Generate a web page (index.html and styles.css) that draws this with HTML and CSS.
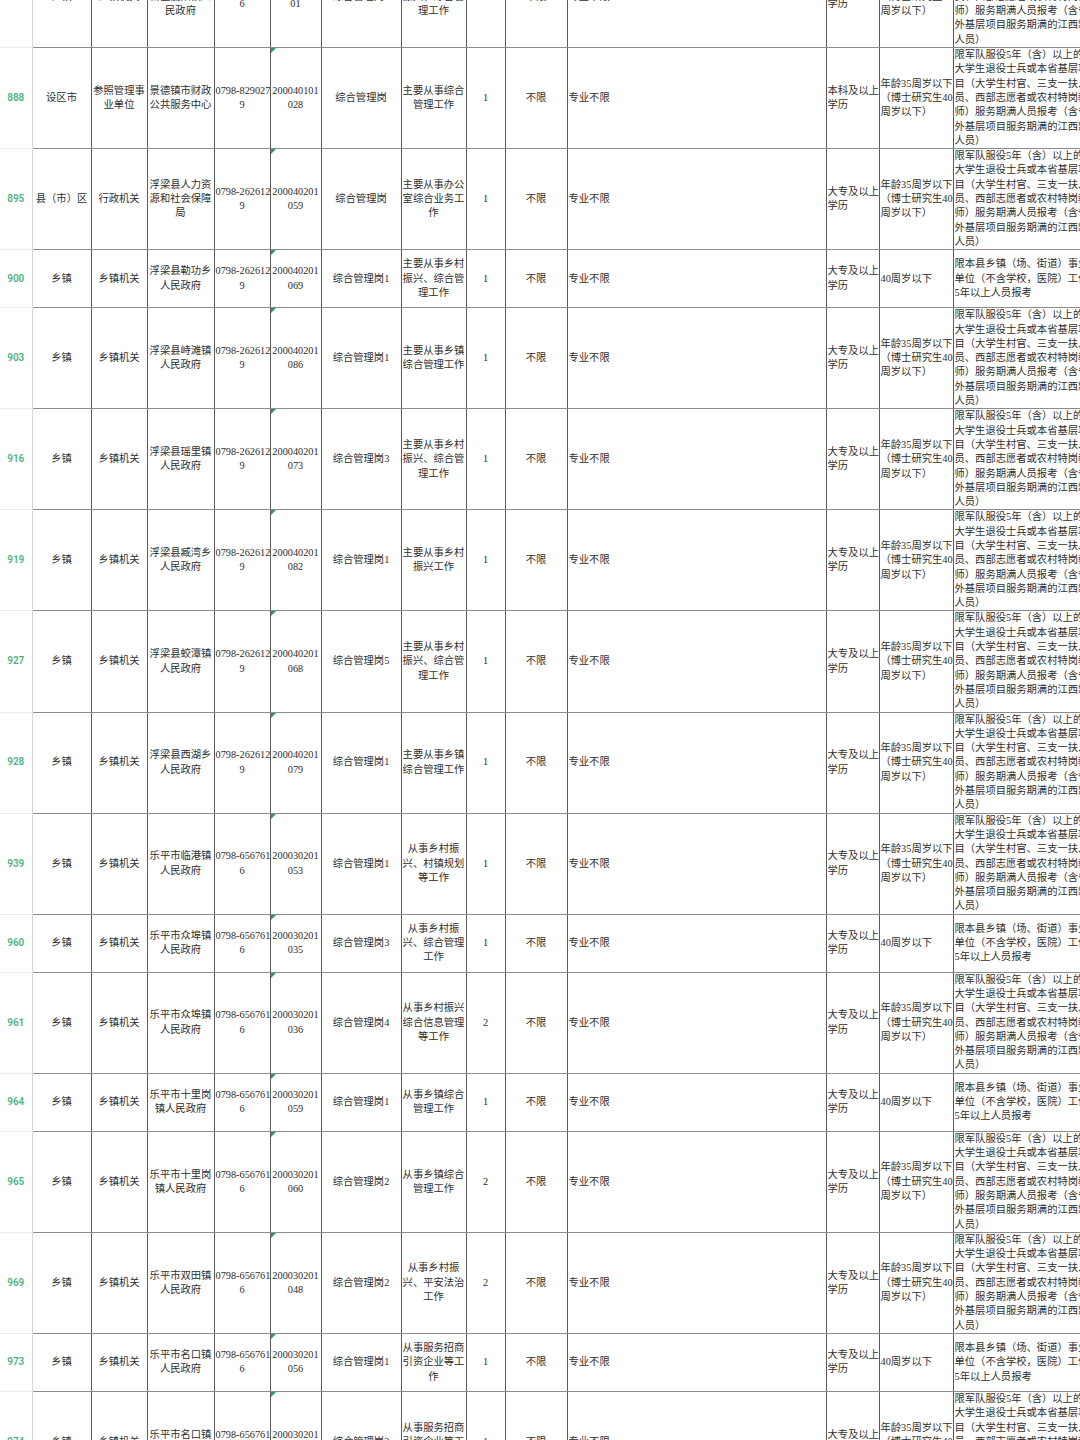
FILE: index.html
```html
<!DOCTYPE html>
<html lang="zh-CN">
<head>
<meta charset="utf-8">
<title>职位表</title>
<link rel="stylesheet" href="styles.css">
</head>
<body>
<div class="sheet">
<table class="grid">
<colgroup>
<col class="c-no"><col class="c-level"><col class="c-type"><col class="c-unit"><col class="c-tel"><col class="c-code"><col class="c-pos"><col class="c-desc"><col class="c-num"><col class="c-limit"><col class="c-major"><col class="c-edu"><col class="c-age"><col class="c-other">
</colgroup>
<tbody>
<tr class="tall">
<td class="no"></td><td class="ctr">乡镇</td><td class="ctr">乡镇机关</td><td class="ctr">景德镇高新区<br>新区丽阳镇人<br>民政府</td><td class="ctr">0798-656761<br>6</td><td class="ctr code">2000302010<br>01</td><td class="ctr">综合管理岗1</td><td class="ctr">主要从事乡村<br>振兴、综合管<br>理工作</td><td class="ctr">1</td><td class="ctr">不限</td><td>专业不限</td><td>大专及以上<br>学历</td><td>年龄35周岁以下<br>（博士研究生40<br>周岁以下）</td><td>限军队服役5年（含）以上的<br>大学生退役士兵或本省基层项<br>目（大学生村官、三支一扶人<br>员、西部志愿者或农村特岗教<br>师）服务期满人员报考（含省<br>外基层项目服务期满的江西籍<br>人员）</td>
</tr>
<tr class="tall">
<td class="no">888</td><td class="ctr">设区市</td><td class="ctr">参照管理事<br>业单位</td><td class="ctr">景德镇市财政<br>公共服务中心</td><td class="ctr">0798-829027<br>9</td><td class="ctr code">200040101<br>028</td><td class="ctr">综合管理岗</td><td class="ctr">主要从事综合<br>管理工作</td><td class="ctr">1</td><td class="ctr">不限</td><td>专业不限</td><td>本科及以上<br>学历</td><td>年龄35周岁以下<br>（博士研究生40<br>周岁以下）</td><td>限军队服役5年（含）以上的<br>大学生退役士兵或本省基层项<br>目（大学生村官、三支一扶人<br>员、西部志愿者或农村特岗教<br>师）服务期满人员报考（含省<br>外基层项目服务期满的江西籍<br>人员）</td>
</tr>
<tr class="tall">
<td class="no">895</td><td class="ctr">县（市）区</td><td class="ctr">行政机关</td><td class="ctr">浮梁县人力资<br>源和社会保障<br>局</td><td class="ctr">0798-262612<br>9</td><td class="ctr code">200040201<br>059</td><td class="ctr">综合管理岗</td><td class="ctr">主要从事办公<br>室综合业务工<br>作</td><td class="ctr">1</td><td class="ctr">不限</td><td>专业不限</td><td>大专及以上<br>学历</td><td>年龄35周岁以下<br>（博士研究生40<br>周岁以下）</td><td>限军队服役5年（含）以上的<br>大学生退役士兵或本省基层项<br>目（大学生村官、三支一扶人<br>员、西部志愿者或农村特岗教<br>师）服务期满人员报考（含省<br>外基层项目服务期满的江西籍<br>人员）</td>
</tr>
<tr class="short">
<td class="no">900</td><td class="ctr">乡镇</td><td class="ctr">乡镇机关</td><td class="ctr">浮梁县勒功乡<br>人民政府</td><td class="ctr">0798-262612<br>9</td><td class="ctr code">200040201<br>069</td><td class="ctr">综合管理岗1</td><td class="ctr">主要从事乡村<br>振兴、综合管<br>理工作</td><td class="ctr">1</td><td class="ctr">不限</td><td>专业不限</td><td>大专及以上<br>学历</td><td>40周岁以下</td><td>限本县乡镇（场、街道）事业<br>单位（不含学校，医院）工作<br>5年以上人员报考</td>
</tr>
<tr class="tall">
<td class="no">903</td><td class="ctr">乡镇</td><td class="ctr">乡镇机关</td><td class="ctr">浮梁县峙滩镇<br>人民政府</td><td class="ctr">0798-262612<br>9</td><td class="ctr code">200040201<br>086</td><td class="ctr">综合管理岗1</td><td class="ctr">主要从事乡镇<br>综合管理工作</td><td class="ctr">1</td><td class="ctr">不限</td><td>专业不限</td><td>大专及以上<br>学历</td><td>年龄35周岁以下<br>（博士研究生40<br>周岁以下）</td><td>限军队服役5年（含）以上的<br>大学生退役士兵或本省基层项<br>目（大学生村官、三支一扶人<br>员、西部志愿者或农村特岗教<br>师）服务期满人员报考（含省<br>外基层项目服务期满的江西籍<br>人员）</td>
</tr>
<tr class="tall">
<td class="no">916</td><td class="ctr">乡镇</td><td class="ctr">乡镇机关</td><td class="ctr">浮梁县瑶里镇<br>人民政府</td><td class="ctr">0798-262612<br>9</td><td class="ctr code">200040201<br>073</td><td class="ctr">综合管理岗3</td><td class="ctr">主要从事乡村<br>振兴、综合管<br>理工作</td><td class="ctr">1</td><td class="ctr">不限</td><td>专业不限</td><td>大专及以上<br>学历</td><td>年龄35周岁以下<br>（博士研究生40<br>周岁以下）</td><td>限军队服役5年（含）以上的<br>大学生退役士兵或本省基层项<br>目（大学生村官、三支一扶人<br>员、西部志愿者或农村特岗教<br>师）服务期满人员报考（含省<br>外基层项目服务期满的江西籍<br>人员）</td>
</tr>
<tr class="tall">
<td class="no">919</td><td class="ctr">乡镇</td><td class="ctr">乡镇机关</td><td class="ctr">浮梁县臧湾乡<br>人民政府</td><td class="ctr">0798-262612<br>9</td><td class="ctr code">200040201<br>082</td><td class="ctr">综合管理岗1</td><td class="ctr">主要从事乡村<br>振兴工作</td><td class="ctr">1</td><td class="ctr">不限</td><td>专业不限</td><td>大专及以上<br>学历</td><td>年龄35周岁以下<br>（博士研究生40<br>周岁以下）</td><td>限军队服役5年（含）以上的<br>大学生退役士兵或本省基层项<br>目（大学生村官、三支一扶人<br>员、西部志愿者或农村特岗教<br>师）服务期满人员报考（含省<br>外基层项目服务期满的江西籍<br>人员）</td>
</tr>
<tr class="tall">
<td class="no">927</td><td class="ctr">乡镇</td><td class="ctr">乡镇机关</td><td class="ctr">浮梁县蛟潭镇<br>人民政府</td><td class="ctr">0798-262612<br>9</td><td class="ctr code">200040201<br>068</td><td class="ctr">综合管理岗5</td><td class="ctr">主要从事乡村<br>振兴、综合管<br>理工作</td><td class="ctr">1</td><td class="ctr">不限</td><td>专业不限</td><td>大专及以上<br>学历</td><td>年龄35周岁以下<br>（博士研究生40<br>周岁以下）</td><td>限军队服役5年（含）以上的<br>大学生退役士兵或本省基层项<br>目（大学生村官、三支一扶人<br>员、西部志愿者或农村特岗教<br>师）服务期满人员报考（含省<br>外基层项目服务期满的江西籍<br>人员）</td>
</tr>
<tr class="tall">
<td class="no">928</td><td class="ctr">乡镇</td><td class="ctr">乡镇机关</td><td class="ctr">浮梁县西湖乡<br>人民政府</td><td class="ctr">0798-262612<br>9</td><td class="ctr code">200040201<br>079</td><td class="ctr">综合管理岗1</td><td class="ctr">主要从事乡镇<br>综合管理工作</td><td class="ctr">1</td><td class="ctr">不限</td><td>专业不限</td><td>大专及以上<br>学历</td><td>年龄35周岁以下<br>（博士研究生40<br>周岁以下）</td><td>限军队服役5年（含）以上的<br>大学生退役士兵或本省基层项<br>目（大学生村官、三支一扶人<br>员、西部志愿者或农村特岗教<br>师）服务期满人员报考（含省<br>外基层项目服务期满的江西籍<br>人员）</td>
</tr>
<tr class="tall">
<td class="no">939</td><td class="ctr">乡镇</td><td class="ctr">乡镇机关</td><td class="ctr">乐平市临港镇<br>人民政府</td><td class="ctr">0798-656761<br>6</td><td class="ctr code">200030201<br>053</td><td class="ctr">综合管理岗1</td><td class="ctr">从事乡村振<br>兴、村镇规划<br>等工作</td><td class="ctr">1</td><td class="ctr">不限</td><td>专业不限</td><td>大专及以上<br>学历</td><td>年龄35周岁以下<br>（博士研究生40<br>周岁以下）</td><td>限军队服役5年（含）以上的<br>大学生退役士兵或本省基层项<br>目（大学生村官、三支一扶人<br>员、西部志愿者或农村特岗教<br>师）服务期满人员报考（含省<br>外基层项目服务期满的江西籍<br>人员）</td>
</tr>
<tr class="short">
<td class="no">960</td><td class="ctr">乡镇</td><td class="ctr">乡镇机关</td><td class="ctr">乐平市众埠镇<br>人民政府</td><td class="ctr">0798-656761<br>6</td><td class="ctr code">200030201<br>035</td><td class="ctr">综合管理岗3</td><td class="ctr">从事乡村振<br>兴、综合管理<br>工作</td><td class="ctr">1</td><td class="ctr">不限</td><td>专业不限</td><td>大专及以上<br>学历</td><td>40周岁以下</td><td>限本县乡镇（场、街道）事业<br>单位（不含学校，医院）工作<br>5年以上人员报考</td>
</tr>
<tr class="tall">
<td class="no">961</td><td class="ctr">乡镇</td><td class="ctr">乡镇机关</td><td class="ctr">乐平市众埠镇<br>人民政府</td><td class="ctr">0798-656761<br>6</td><td class="ctr code">200030201<br>036</td><td class="ctr">综合管理岗4</td><td class="ctr">从事乡村振兴<br>综合信息管理<br>等工作</td><td class="ctr">2</td><td class="ctr">不限</td><td>专业不限</td><td>大专及以上<br>学历</td><td>年龄35周岁以下<br>（博士研究生40<br>周岁以下）</td><td>限军队服役5年（含）以上的<br>大学生退役士兵或本省基层项<br>目（大学生村官、三支一扶人<br>员、西部志愿者或农村特岗教<br>师）服务期满人员报考（含省<br>外基层项目服务期满的江西籍<br>人员）</td>
</tr>
<tr class="short">
<td class="no">964</td><td class="ctr">乡镇</td><td class="ctr">乡镇机关</td><td class="ctr">乐平市十里岗<br>镇人民政府</td><td class="ctr">0798-656761<br>6</td><td class="ctr code">200030201<br>059</td><td class="ctr">综合管理岗1</td><td class="ctr">从事乡镇综合<br>管理工作</td><td class="ctr">1</td><td class="ctr">不限</td><td>专业不限</td><td>大专及以上<br>学历</td><td>40周岁以下</td><td>限本县乡镇（场、街道）事业<br>单位（不含学校，医院）工作<br>5年以上人员报考</td>
</tr>
<tr class="tall">
<td class="no">965</td><td class="ctr">乡镇</td><td class="ctr">乡镇机关</td><td class="ctr">乐平市十里岗<br>镇人民政府</td><td class="ctr">0798-656761<br>6</td><td class="ctr code">200030201<br>060</td><td class="ctr">综合管理岗2</td><td class="ctr">从事乡镇综合<br>管理工作</td><td class="ctr">2</td><td class="ctr">不限</td><td>专业不限</td><td>大专及以上<br>学历</td><td>年龄35周岁以下<br>（博士研究生40<br>周岁以下）</td><td>限军队服役5年（含）以上的<br>大学生退役士兵或本省基层项<br>目（大学生村官、三支一扶人<br>员、西部志愿者或农村特岗教<br>师）服务期满人员报考（含省<br>外基层项目服务期满的江西籍<br>人员）</td>
</tr>
<tr class="tall">
<td class="no">969</td><td class="ctr">乡镇</td><td class="ctr">乡镇机关</td><td class="ctr">乐平市双田镇<br>人民政府</td><td class="ctr">0798-656761<br>6</td><td class="ctr code">200030201<br>048</td><td class="ctr">综合管理岗2</td><td class="ctr">从事乡村振<br>兴、平安法治<br>工作</td><td class="ctr">2</td><td class="ctr">不限</td><td>专业不限</td><td>大专及以上<br>学历</td><td>年龄35周岁以下<br>（博士研究生40<br>周岁以下）</td><td>限军队服役5年（含）以上的<br>大学生退役士兵或本省基层项<br>目（大学生村官、三支一扶人<br>员、西部志愿者或农村特岗教<br>师）服务期满人员报考（含省<br>外基层项目服务期满的江西籍<br>人员）</td>
</tr>
<tr class="short">
<td class="no">973</td><td class="ctr">乡镇</td><td class="ctr">乡镇机关</td><td class="ctr">乐平市名口镇<br>人民政府</td><td class="ctr">0798-656761<br>6</td><td class="ctr code">200030201<br>056</td><td class="ctr">综合管理岗1</td><td class="ctr">从事服务招商<br>引资企业等工<br>作</td><td class="ctr">1</td><td class="ctr">不限</td><td>专业不限</td><td>大专及以上<br>学历</td><td>40周岁以下</td><td>限本县乡镇（场、街道）事业<br>单位（不含学校，医院）工作<br>5年以上人员报考</td>
</tr>
<tr class="tall">
<td class="no">974</td><td class="ctr">乡镇</td><td class="ctr">乡镇机关</td><td class="ctr">乐平市名口镇<br>人民政府</td><td class="ctr">0798-656761<br>6</td><td class="ctr code">200030201<br>057</td><td class="ctr">综合管理岗2</td><td class="ctr">从事服务招商<br>引资企业等工<br>作</td><td class="ctr">1</td><td class="ctr">不限</td><td>专业不限</td><td>大专及以上<br>学历</td><td>年龄35周岁以下<br>（博士研究生40<br>周岁以下）</td><td>限军队服役5年（含）以上的<br>大学生退役士兵或本省基层项<br>目（大学生村官、三支一扶人<br>员、西部志愿者或农村特岗教<br>师）服务期满人员报考（含省<br>外基层项目服务期满的江西籍<br>人员）</td>
</tr>
</tbody>
</table>
</div>
</body>
</html>
```

FILE: styles.css
```css
html, body {
  margin: 0;
  padding: 0;
  background: #ffffff;
}

.sheet {
  width: 1080px;
  height: 1440px;
  overflow: hidden;
  background: #ffffff;
}

.grid {
  margin-top: -54px;
  width: 1100px;
  table-layout: fixed;
  border-collapse: collapse;
  font-family: "Liberation Serif", "Noto Sans CJK SC", serif;
  font-size: 10.3px;
  line-height: 14.3px;
  color: #2e2e2e;
}

.c-no { width: 32px; }
.c-level { width: 59px; }
.c-type { width: 56px; }
.c-unit { width: 67px; }
.c-tel { width: 56px; }
.c-code { width: 51px; }
.c-pos { width: 80px; }
.c-desc { width: 65px; }
.c-num { width: 39px; }
.c-limit { width: 62px; }
.c-major { width: 259px; }
.c-edu { width: 53px; }
.c-age { width: 74px; }
.c-other { width: 147px; }

.grid td {
  padding: 0 1px;
  border-left: 1px solid #5a5a5a;
  border-right: 1px solid #5a5a5a;
  border-top: 1px solid #8c8c8c;
  border-bottom: 1px solid #8c8c8c;
  vertical-align: middle;
  text-align: left;
  white-space: nowrap;
  overflow: hidden;
}

.grid td.ctr {
  text-align: center;
}

.grid td.no {
  border-left: none;
  border-right: 1px solid #d6d6d6;
  border-top: 1px solid #e6f1ea;
  border-bottom: 1px solid #e6f1ea;
  text-align: center;
  font-family: Roboto, "Liberation Sans", sans-serif;
  font-weight: 600;
  font-size: 10px;
  color: #4fb383;
  padding: 0;
}

.grid td.code {
  position: relative;
  overflow: visible;
}

.grid td.code::before {
  content: "";
  position: absolute;
  left: 0;
  top: 0;
  width: 0;
  height: 0;
  border-top: 5px solid #2f9a63;
  border-right: 5px solid transparent;
}

.tall { height: 101px; }
.short { height: 58px; }
```
